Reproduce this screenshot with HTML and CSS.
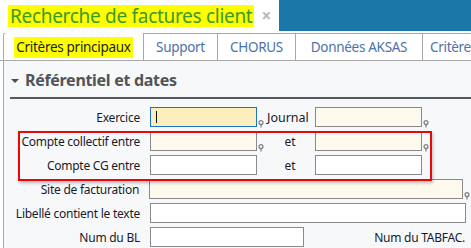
FILE: index.html
```html
<!DOCTYPE html>
<html lang="fr">

<head>
    <meta charset="UTF-8">
    <title>Recherche de factures client</title>
    <link rel="stylesheet" href="styles.css">
</head>

<body>
    <div class="titlebar">
        <div class="title-area">
            <span class="title">Recherche de factures client</span>
            <span class="close">&times;</span>
        </div>
        <div class="title-fill"></div>
    </div>
    <div class="tabs">
        <div class="tab active"><span class="mark">Critères principaux</span></div>
        <div class="tab support">Support</div>
        <div class="tab chorus">CHORUS</div>
        <div class="tab aksas">Données AKSAS</div>
        <div class="tab last">Critères</div>
    </div>
    <div class="panel">
        <div class="section-head">
            <span class="caret"></span>
            <span class="section-title">Référentiel et dates</span>
        </div>
        <div class="form">
            <div class="row">
                <label class="lbl">Exercice</label>
                <div class="field short focus"><span class="cursor"></span></div>
                <span class="pin"><svg width="6" height="8" viewBox="0 0 6 8"><circle cx="3" cy="2.6" r="2" fill="none" stroke="#7a7a7a" stroke-width="1.2"/><path d="M3 4.6V7.5" stroke="#7a7a7a" stroke-width="1.2"/></svg></span>
                <label class="mid left">Journal</label>
                <div class="field short tinted"></div>
                <span class="pin"><svg width="6" height="8" viewBox="0 0 6 8"><circle cx="3" cy="2.6" r="2" fill="none" stroke="#7a7a7a" stroke-width="1.2"/><path d="M3 4.6V7.5" stroke="#7a7a7a" stroke-width="1.2"/></svg></span>
            </div>
            <div class="row">
                <label class="lbl">Compte collectif entre</label>
                <div class="field short tinted"></div>
                <span class="pin"><svg width="6" height="8" viewBox="0 0 6 8"><circle cx="3" cy="2.6" r="2" fill="none" stroke="#7a7a7a" stroke-width="1.2"/><path d="M3 4.6V7.5" stroke="#7a7a7a" stroke-width="1.2"/></svg></span>
                <label class="mid">et</label>
                <div class="field short tinted"></div>
                <span class="pin"><svg width="6" height="8" viewBox="0 0 6 8"><circle cx="3" cy="2.6" r="2" fill="none" stroke="#7a7a7a" stroke-width="1.2"/><path d="M3 4.6V7.5" stroke="#7a7a7a" stroke-width="1.2"/></svg></span>
            </div>
            <div class="row">
                <label class="lbl">Compte CG entre</label>
                <div class="field short"></div>
                <span class="pin"></span>
                <label class="mid">et</label>
                <div class="field short"></div>
            </div>
            <div class="row">
                <label class="lbl">Site de facturation</label>
                <div class="field wide tinted"></div>
                <span class="pin"><svg width="6" height="8" viewBox="0 0 6 8"><circle cx="3" cy="2.6" r="2" fill="none" stroke="#7a7a7a" stroke-width="1.2"/><path d="M3 4.6V7.5" stroke="#7a7a7a" stroke-width="1.2"/></svg></span>
            </div>
            <div class="row">
                <label class="lbl">Libellé contient le texte</label>
                <div class="field wide"></div>
            </div>
            <div class="row">
                <label class="lbl">Num du BL</label>
                <div class="field medium"></div>
                <label class="tail">Num du TABFAC.</label>
            </div>
            <div class="highlight-box"></div>
        </div>
    </div>
</body>

</html>
```

FILE: styles.css
```css
body {
    margin: 0;
    background-color: #ffffff;
    font-family: 'Noto Sans', 'Open Sans', sans-serif;
    overflow: hidden;
    width: 471px;
    height: 248px;
}

/* Title bar */
.titlebar {
    display: flex;
    height: 31px;
}

.title-area {
    width: 279px;
    display: flex;
    align-items: center;
    padding-left: 8px;
    box-sizing: border-box;
}

.title {
    background-color: #ffff00;
    color: #3a9a2a;
    font-size: 19px;
    line-height: 22px;
    padding: 0 2px;
    letter-spacing: -0.3px;
    white-space: nowrap;
}

.close {
    color: #b8b8b8;
    font-size: 17px;
    font-weight: bold;
    margin-left: 7px;
    line-height: 22px;
}

.title-fill {
    flex: 1;
    background-color: #1a77a8;
}

/* Tabs */
.tabs {
    display: flex;
    height: 27px;
    margin-top: 2px;
    border-bottom: 1px solid #a9a9a9;
    padding-left: 3px;
    overflow: hidden;
}

.tab {
    flex-shrink: 0;
    display: flex;
    align-items: center;
    justify-content: center;
    box-sizing: border-box;
    font-size: 13.5px;
    color: #4c72a8;
    border-top: 1px solid #a9a9a9;
    border-right: 1px solid #a9a9a9;
    letter-spacing: -0.3px;
    white-space: nowrap;
}

.tab.active {
    width: 141px;
    color: #1c1c1c;
    background-color: #ffffff;
    border-left: 1px solid #a9a9a9;
    border-top-left-radius: 4px;
    margin-bottom: -1px;
    margin-top: -1px;
}

.tab.support {
    width: 74px;
}

.tab.chorus {
    width: 78px;
}

.tab.aksas {
    width: 127px;
}

.tab.last {
    width: 60px;
    border-right: none;
    justify-content: flex-start;
    padding-left: 7px;
}

.mark {
    background-color: #ffff00;
    line-height: 21px;
    padding: 0 2px;
}

/* Content panel */
.panel {
    background-color: #f7f8fa;
    border-left: 1px solid #a9a9a9;
    margin-left: 3px;
    height: 190px;
    padding-left: 6px;
}

.section-head {
    display: flex;
    align-items: center;
    height: 35px;
    border-bottom: 2px solid #555a60;
    padding-left: 1px;
    padding-top: 1px;
}

.caret {
    width: 0;
    height: 0;
    border-left: 4px solid transparent;
    border-right: 4px solid transparent;
    border-top: 4px solid #4a4e52;
    margin: 3px 6px 0 0;
}

.section-title {
    font-size: 16px;
    font-weight: bold;
    color: #505458;
    letter-spacing: -0.3px;
}

/* Form rows */
.form {
    position: relative;
    padding-top: 8px;
    margin-left: -9px;
}

.row {
    display: flex;
    align-items: center;
    height: 20px;
    margin-bottom: 4px;
    font-size: 12px;
    color: #1a1a2a;
}

.lbl {
    width: 139px;
    text-align: right;
    margin-right: 10px;
    letter-spacing: -0.25px;
    white-space: nowrap;
}

.field {
    height: 20px;
    box-sizing: border-box;
    border: 1px solid #8a8a8a;
    background-color: #ffffff;
    position: relative;
}

.field.short {
    width: 107px;
}

.field.medium {
    width: 154px;
}

.field.wide {
    width: 316px;
}

.field.tinted {
    background-color: #fdf9ec;
}

.field.focus {
    background-color: #fdefbd;
    border-color: #1a74c8;
}

.cursor {
    position: absolute;
    left: 5px;
    top: 3px;
    width: 1px;
    height: 12px;
    background-color: #111;
}

.pin {
    width: 8px;
    height: 20px;
    display: flex;
    align-items: flex-end;
    justify-content: center;
}

.pin svg {
    margin-bottom: -1px;
}

.mid {
    width: 50px;
    text-align: center;
}

.mid.left {
    text-align: left;
    padding-left: 2px;
    box-sizing: border-box;
    font-size: 12.5px;
}

.tail {
    margin-left: auto;
    margin-right: 6px;
    letter-spacing: -0.25px;
}

/* Red annotation box over the two account rows */
.highlight-box {
    position: absolute;
    left: 17px;
    top: 32px;
    width: 410px;
    height: 46px;
    border: 2px solid #e8080c;
    box-shadow: 1px 2px 3px rgba(0, 0, 0, 0.25);
    pointer-events: none;
}
```
